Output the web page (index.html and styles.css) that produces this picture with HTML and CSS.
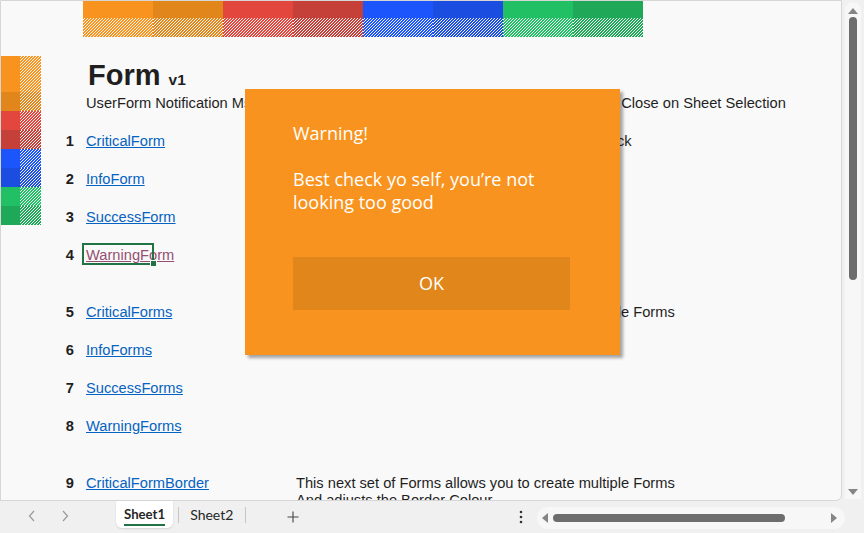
FILE: index.html
```html
<!DOCTYPE html>
<html lang="en">
<head>
    <meta charset="UTF-8">
    <title>Form v1</title>
    <link rel="stylesheet" href="styles.css">
</head>
<body>
    <div class="window">
        <div class="main">
            <div class="sheet">
                <div class="banner">
                    <div class="swatch orange"></div>
                    <div class="swatch orange-dark"></div>
                    <div class="swatch red"></div>
                    <div class="swatch red-dark"></div>
                    <div class="swatch blue"></div>
                    <div class="swatch blue-dark"></div>
                    <div class="swatch green"></div>
                    <div class="swatch green-dark"></div>
                </div>
                <div class="body">
                    <div class="strip">
                        <div class="chip orange tall"></div>
                        <div class="chip orange-dark"></div>
                        <div class="chip red"></div>
                        <div class="chip red-dark"></div>
                        <div class="chip blue"></div>
                        <div class="chip blue-dark"></div>
                        <div class="chip green"></div>
                        <div class="chip green-dark"></div>
                    </div>
                    <div class="content">
                        <h1 class="title">Form <small>v1</small></h1>
                        <p class="subtitle">UserForm Notification MsgBox Replacements with the option to Auto Close and to Close on Sheet Selection</p>
                        <div class="rows">
                            <div class="row">
                                <span class="num">1</span>
                                <span class="name"><a href="#">CriticalForm</a></span>
                                <span class="desc">Single Forms that close with an OK button or a click</span>
                            </div>
                            <div class="row">
                                <span class="num">2</span>
                                <span class="name"><a href="#">InfoForm</a></span>
                                <span class="desc"></span>
                            </div>
                            <div class="row">
                                <span class="num">3</span>
                                <span class="name"><a href="#">SuccessForm</a></span>
                                <span class="desc"></span>
                            </div>
                            <div class="row">
                                <span class="num">4</span>
                                <span class="name active">
                                    <a href="#" class="visited">WarningForm</a>
                                    <span class="selection"></span>
                                    <span class="handle"></span>
                                </span>
                                <span class="desc"></span>
                            </div>
                            <div class="spacer"></div>
                            <div class="row">
                                <span class="num">5</span>
                                <span class="name"><a href="#">CriticalForms</a></span>
                                <span class="desc">This next set of Forms allows you to create multiple Forms</span>
                            </div>
                            <div class="row">
                                <span class="num">6</span>
                                <span class="name"><a href="#">InfoForms</a></span>
                                <span class="desc"></span>
                            </div>
                            <div class="row">
                                <span class="num">7</span>
                                <span class="name"><a href="#">SuccessForms</a></span>
                                <span class="desc"></span>
                            </div>
                            <div class="row">
                                <span class="num">8</span>
                                <span class="name"><a href="#">WarningForms</a></span>
                                <span class="desc"></span>
                            </div>
                            <div class="spacer"></div>
                            <div class="row">
                                <span class="num">9</span>
                                <span class="name"><a href="#">CriticalFormBorder</a></span>
                                <span class="desc">This next set of Forms allows you to create multiple Forms<br>And adjusts the Border Colour</span>
                            </div>
                        </div>
                    </div>
                </div>

                <!-- la fenêtre Warning par-dessus la feuille -->
                <div class="dialog">
                    <p class="dialog-title">Warning!</p>
                    <p class="dialog-msg">Best check yo self, you’re not looking too good</p>
                    <div class="dialog-btn">OK</div>
                </div>
            </div>
            <div class="vscroll">
                <div class="vtrack">
                    <span class="arrow-up"></span>
                    <span class="vthumb"></span>
                    <span class="arrow-down"></span>
                </div>
            </div>
        </div>
        <div class="tabbar">
            <span class="nav">
                <svg width="8" height="12" viewBox="0 0 8 12"><path d="M6 1 L1.5 6 L6 11" fill="none" stroke="#9a9a9a" stroke-width="1.2"/></svg>
            </span>
            <span class="nav">
                <svg width="8" height="12" viewBox="0 0 8 12"><path d="M2 1 L6.5 6 L2 11" fill="none" stroke="#9a9a9a" stroke-width="1.2"/></svg>
            </span>
            <span class="tab current">Sheet1</span>
            <span class="sep"></span>
            <span class="tab">Sheet2</span>
            <span class="sep"></span>
            <span class="add">
                <svg width="12" height="12" viewBox="0 0 12 12"><path d="M6 0.5 V11.5 M0.5 6 H11.5" stroke="#444" stroke-width="1.1"/></svg>
            </span>
            <span class="fill"></span>
            <span class="more">
                <svg width="4" height="14" viewBox="0 0 4 14"><circle cx="2" cy="2" r="1.3" fill="#333"/><circle cx="2" cy="7" r="1.3" fill="#333"/><circle cx="2" cy="12" r="1.3" fill="#333"/></svg>
            </span>
            <div class="htrack">
                <span class="arrow-left"></span>
                <span class="hthumb"></span>
                <span class="arrow-right"></span>
            </div>
        </div>
    </div>
</body>
</html>
```

FILE: styles.css
```css
/* Mise en page générale */
html, body {
    margin: 0;
    padding: 0;
}
body {
    background-color: #f0f0f0;
    font-family: "Liberation Sans", Arial, sans-serif;
}
.window {
    width: 864px;
    height: 533px;
    display: flex;
    flex-direction: column;
    overflow: hidden;
}
.main {
    display: flex;
    height: 501px;
}

/* Feuille */
.sheet {
    position: relative;
    flex: 1;
    background-color: #f9f9f9;
    border: 1px solid #d6d6d6;
    border-radius: 0 0 6px 0;
    overflow: hidden;
    color: #1f1f1f;
}
.banner {
    display: flex;
    margin-left: 82px;
    height: 36px;
}
.swatch {
    width: 70px;
    position: relative;
}
.swatch::after {
    content: "";
    position: absolute;
    left: 0;
    right: 0;
    top: 17px;
    bottom: 0;
    background-image: repeating-linear-gradient(135deg, transparent 0 1.15px, rgba(255, 255, 255, 0.92) 1.15px 2.12px);
}
.orange { background-color: #f7931e; }
.orange-dark { background-color: #e0861a; }
.red { background-color: #e2463d; }
.red-dark { background-color: #c6403a; }
.blue { background-color: #1c55fb; }
.blue-dark { background-color: #1b4ee0; }
.green { background-color: #21c064; }
.green-dark { background-color: #1ea858; }

.body {
    display: flex;
    margin-top: 19px;
}
.strip {
    width: 40px;
    flex-shrink: 0;
}
.chip {
    height: 19px;
    position: relative;
}
.chip.tall {
    height: 36px;
}
.chip::after {
    content: "";
    position: absolute;
    left: 19px;
    right: 0;
    top: 0;
    bottom: 0;
    background-image: repeating-linear-gradient(135deg, transparent 0 1.15px, rgba(255, 255, 255, 0.92) 1.15px 2.12px);
}
.content {
    flex: 1;
}
.title {
    margin: 0 0 0 47px;
    padding-top: 4px;
    font-size: 29px;
    line-height: 30px;
    font-weight: bold;
}
.title small {
    font-size: 15.5px;
}
.subtitle {
    margin: 0 0 0 45px;
    font-size: 14.67px;
    line-height: 17px;
    white-space: nowrap;
}
.rows {
    margin-top: 10px;
}
.row {
    display: grid;
    grid-template-columns: 33px 198px 1fr;
    column-gap: 12px;
    height: 38px;
    font-size: 14.67px;
    line-height: 17px;
}
.row > span {
    padding-top: 11px;
    white-space: nowrap;
}
.num {
    text-align: right;
    font-weight: bold;
}
.name {
    position: relative;
}
.name a {
    color: #0563c1;
    text-decoration: underline;
}
.name a.visited {
    color: #954f72;
}
.spacer {
    height: 19px;
}
.selection {
    position: absolute;
    left: -4px;
    top: 7px;
    width: 68px;
    height: 18px;
    border: 2px solid #217346;
    padding: 0 !important;
}
.handle {
    position: absolute;
    left: 65px;
    top: 25px;
    width: 5px;
    height: 5px;
    background-color: #217346;
    box-shadow: 0 0 0 1px #f9f9f9;
    padding: 0 !important;
}

/* Fenêtre d'avertissement */
.dialog {
    position: absolute;
    left: 244px;
    top: 88px;
    width: 327px;
    height: 233px;
    padding: 33px 0 0 48px;
    background-color: #f7931e;
    box-shadow: 3px 3px 3px rgba(0, 0, 0, 0.35);
    color: #fff;
    font-family: "Open Sans", "Noto Sans", sans-serif;
    font-size: 18px;
    line-height: 23px;
}
.dialog p {
    margin: 0;
}
.dialog-msg {
    margin-top: 23px !important;
    width: 277px;
}
.dialog-btn {
    margin-top: 43px;
    width: 277px;
    height: 53px;
    background-color: #e0861a;
    display: flex;
    align-items: center;
    justify-content: center;
}

/* Barre de défilement verticale */
.vscroll {
    width: 22px;
    padding: 2px 3px 0 3px;
    box-sizing: border-box;
}
.vtrack {
    height: 497px;
    background-color: #f7f7f7;
    border-radius: 8px 8px 0 0;
    display: flex;
    flex-direction: column;
    align-items: center;
}
.arrow-up {
    margin-top: 6px;
    width: 0;
    height: 0;
    border-left: 5px solid transparent;
    border-right: 5px solid transparent;
    border-bottom: 6px solid #858585;
}
.vthumb {
    margin-top: 3px;
    width: 8px;
    height: 263px;
    border-radius: 4px;
    background-color: #6d6d6d;
}
.arrow-down {
    margin-top: auto;
    margin-bottom: 4px;
    width: 0;
    height: 0;
    border-left: 5px solid transparent;
    border-right: 5px solid transparent;
    border-top: 6px solid #858585;
}

/* Onglets du bas */
.tabbar {
    height: 32px;
    display: flex;
    align-items: flex-start;
    font-family: Lato, "Noto Sans", sans-serif;
    font-size: 14px;
    color: #262626;
}
.nav {
    width: 33px;
    height: 30px;
    display: flex;
    align-items: center;
    justify-content: center;
}
.nav:first-child {
    margin-left: 15px;
}
.tab {
    height: 27px;
    padding: 0 7px 0 11px;
    line-height: 27px;
}
.tab.current {
    margin-left: 35px;
    padding: 0 8px;
    background-color: #fff;
    border-radius: 0 0 6px 6px;
    box-shadow: 0 1px 2px rgba(0, 0, 0, 0.12);
    font-size: 13.2px;
    font-weight: bold;
    position: relative;
}
.tab.current::after {
    content: "";
    position: absolute;
    left: 8px;
    right: 8px;
    bottom: 2px;
    height: 2px;
    background-color: #217346;
}
.sep {
    width: 1px;
    height: 16px;
    margin: 6px 0 0 5px;
    background-color: #c6c6c6;
}
.add {
    margin-left: 37px;
    width: 20px;
    height: 31px;
    display: flex;
    align-items: center;
    justify-content: center;
}
.fill {
    flex: 1;
}
.more {
    width: 16px;
    height: 32px;
    display: flex;
    align-items: center;
    justify-content: center;
    margin-right: 8px;
}
.htrack {
    width: 308px;
    height: 22px;
    margin: 6px 19px 0 0;
    background-color: #f7f7f7;
    border-radius: 11px;
    display: flex;
    align-items: center;
    padding: 0 5px 0 5px;
    box-sizing: border-box;
}
.arrow-left {
    width: 0;
    height: 0;
    border-top: 5px solid transparent;
    border-bottom: 5px solid transparent;
    border-right: 6px solid #858585;
}
.hthumb {
    margin-left: 5px;
    width: 232px;
    height: 8px;
    border-radius: 4px;
    background-color: #6d6d6d;
}
.arrow-right {
    margin-left: auto;
    margin-right: 3px;
    width: 0;
    height: 0;
    border-top: 5px solid transparent;
    border-bottom: 5px solid transparent;
    border-left: 6px solid #858585;
}
```
